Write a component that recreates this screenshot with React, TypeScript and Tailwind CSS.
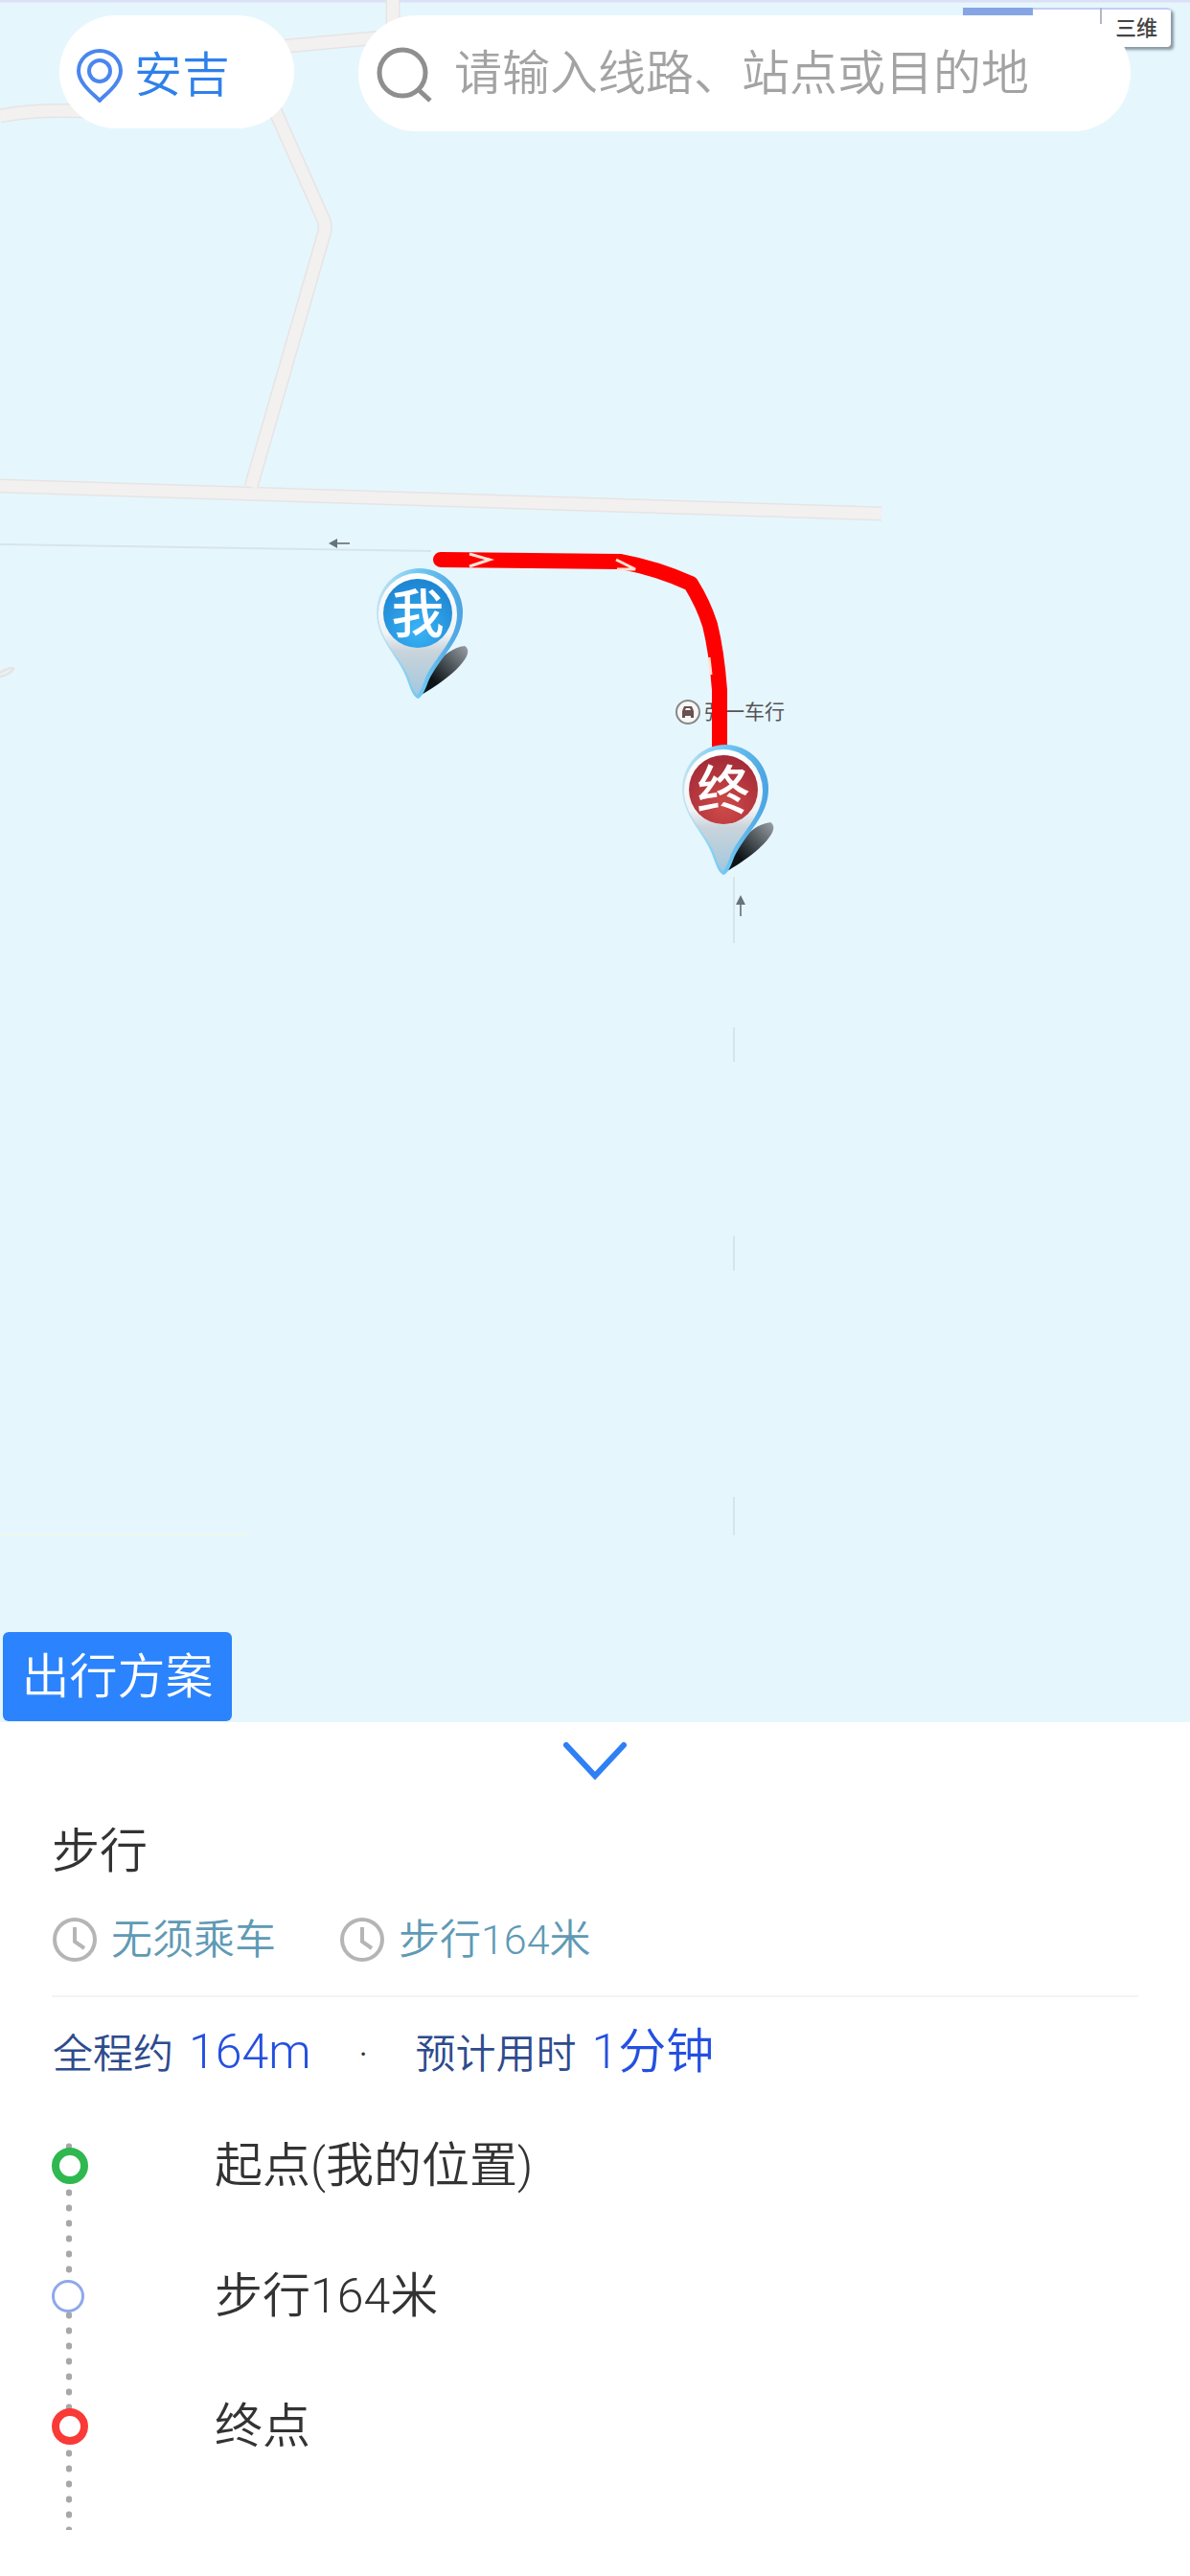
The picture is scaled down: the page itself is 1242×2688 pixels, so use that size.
import React from 'react';

const STEP_ROW = 'flex items-center gap-[132px] h-[136px] pl-[54px]';

function LocationIcon() {
  return (
    <svg width="48" height="56" viewBox="0 0 48 56" fill="none" stroke="#4a86ee" strokeWidth="4" strokeLinejoin="round" aria-hidden="true">
      <path d="M24 54 C20 49 2 37 2 23 A22 21 0 0 1 46 23 C46 37 28 49 24 54 Z" />
      <circle cx="24" cy="23" r="11" />
    </svg>
  );
}

function SearchIcon() {
  return (
    <svg className="shrink-0" width="60" height="60" viewBox="0 0 60 60" fill="none" stroke="#8f8f8f" strokeWidth="5" aria-hidden="true">
      <circle cx="28" cy="29" r="24" />
      <path d="M44 46 L57 58" />
    </svg>
  );
}

function ClockIcon() {
  return (
    <svg width="48" height="48" viewBox="0 0 48 48" fill="none" stroke="#b5b5b5" strokeWidth="4" aria-hidden="true">
      <circle cx="24" cy="24" r="21" />
      <path d="M24 11 V26 L34 33" />
    </svg>
  );
}

function Marker({ label, tone }: { label: string; tone: 'blue' | 'red' }) {
  const blue = tone === 'blue';
  const id = 'marker-' + tone;
  return (
    <svg width="110" height="146" viewBox="0 0 110 146" role="img" aria-label={label}>
      <defs>
        <linearGradient id={id + '-edge'} x1="0" y1="0" x2="1" y2="0">
          <stop offset="0" stopColor="#c3e4f4" />
          <stop offset="0.5" stopColor="#6fc8f2" />
          <stop offset="1" stopColor="#4aa3e2" />
        </linearGradient>
        <linearGradient id={id + '-body'} x1="0" y1="0" x2="0" y2="1">
          <stop offset="0" stopColor="#ffffff" />
          <stop offset="0.5" stopColor="#f0f3f5" />
          <stop offset="0.64" stopColor="#c9d4db" />
          <stop offset="1" stopColor="#a3c8de" />
        </linearGradient>
        <linearGradient id={id + '-shade'} x1="0" y1="1" x2="1" y2="0">
          <stop offset="0.3" stopColor="#0d1418" />
          <stop offset="1" stopColor="#9aa1a6" />
        </linearGradient>
        <radialGradient id={id + '-disc'} cx="0.5" cy="0.75" r="0.7">
          <stop offset="0" stopColor={blue ? '#3ab4f6' : '#cf4a48'} />
          <stop offset="1" stopColor={blue ? '#1f86d3' : '#a52c38'} />
        </radialGradient>
      </defs>
      <path d="M47 137 C53 117 70 88 94 85 C106 92 84 116 47 137 Z" fill={`url(#${id}-shade)`} />
      <path d="M45 140 C39 137 37 128 33 118 C24 95 2 78 2 50 A45 46 0 0 1 92 50 C92 80 68 96 56 122 C52 133 49 139 45 140 Z" fill={`url(#${id}-edge)`} />
      <path d="M44 136 C40 131 38 125 35 116 C26 95 4 78 4 52 A41 43 0 0 1 86 52 C86 78 64 96 54 116 C50 126 48 133 44 136 Z" fill={`url(#${id}-body)`} />
      <ellipse cx="45" cy="51" rx="36" ry="36" fill={`url(#${id}-disc)`} />
      <text x="45" y="71" textAnchor="middle" fontSize="55" fontWeight="500" fill="#fff" fontFamily="Noto Sans CJK SC, sans-serif">{label}</text>
    </svg>
  );
}

function MapDrawing() {
  return (
    <svg className="absolute left-0 top-0" width="1242" height="1797" viewBox="0 0 1242 1797" fill="none" aria-hidden="true">
      <path d="M0 1 H1242" stroke="#dcdff6" strokeWidth="3" />
      <g stroke="#e6e4e4" strokeWidth="15" strokeLinejoin="round">
        <path d="M0 121 Q35 114 90 116 L300 48 L410 38 V0" />
        <path d="M286 113 L338 230 Q341 238 337 248 L262 508" />
        <path d="M0 507 L920 536" />
        <path d="M0 702 Q12 695 14 698 Q10 704 0 706" strokeWidth="3" />
      </g>
      <g stroke="#f3f0f0" strokeWidth="12" strokeLinejoin="round">
        <path d="M0 121 Q35 114 90 116 L300 48 L410 38 V0" />
        <path d="M286 113 L338 230 Q341 238 337 248 L262 508" />
        <path d="M0 507 L920 536" />
      </g>
      <path d="M0 568 L450 575 M766 915 V984 M766 1072 V1108 M766 1290 V1326 M766 1562 V1602" stroke="#d8e4ea" strokeWidth="2" />
      <path d="M0 1602 H258" stroke="#eef8ea" strokeWidth="2" />
      <g stroke="#7d898f" strokeWidth="2">
        <path d="M348 567 H365" />
        <path d="M773 940 V956" />
      </g>
      <path d="M343 567 L352 562 V572 Z M773 934 L768 944 H778 Z" fill="#66737a" />
    </svg>
  );
}

function RouteLine() {
  return (
    <svg className="absolute left-[440px] top-[560px]" width="330" height="230" viewBox="0 0 330 230" fill="none" aria-hidden="true">
      <path d="M20 24 L208 26 Q246 33 281 49 Q294 70 301 92 Q308 120 311 160 L311 220" stroke="#ff0000" strokeWidth="16" strokeLinecap="round" strokeLinejoin="round" />
      <path d="M50 18 L71 24 L50 31 M203 24 L223 34 L204 34 M300 126 L302 144" stroke="#ffe3d6" strokeWidth="3" />
    </svg>
  );
}

function StepDot({ tone }: { tone: string }) {
  return <span className={`relative box-border rounded-full bg-white ${tone}`} />;
}

export default function App() {
  return (
    <main className="flex min-h-screen w-full flex-col bg-white text-[50px] [font-weight:350] leading-[60px] text-[#333] [font-family:Roboto,'Noto_Sans_CJK_SC',sans-serif]">
      <section className="relative flex h-[1797px] flex-col justify-between overflow-hidden bg-[#e6f6fd]">
        <MapDrawing />
        <div className="absolute left-[704px] top-[729px] flex items-center gap-[3px] text-[21px] font-normal leading-[28px] text-[#555]">
          <svg width="28" height="28" viewBox="0 0 28 28" aria-hidden="true">
            <circle cx="14" cy="14" r="12" fill="#f7f7f7" stroke="#888" strokeWidth="2" />
            <path d="M8 13 L10 8 H18 L20 13 V20 H17 V18 H11 V20 H8 Z" fill="#6b5050" />
            <path d="M11 12 L12 10 H16 L17 12 Z" fill="#fff" />
          </svg>
          <span>弘一车行</span>
        </div>
        <RouteLine />
        <div className="absolute left-[391px] top-[589px]"><Marker label="我" tone="blue" /></div>
        <div className="absolute left-[710px] top-[773px]"><Marker label="终" tone="red" /></div>
        <button className="absolute right-[20px] top-[8px] flex h-[41px] w-[216px] items-center justify-end rounded-[4px] border-t-2 border-[#c3cdf5] bg-white pr-[14px] text-[22px] font-medium leading-[28px] text-[#444] shadow-[3px_3px_3px_#8997a5]">三维</button>
        <header className="relative flex items-start pl-[62px] pr-[62px] pt-4">
          <button className="flex h-[118px] w-[245px] items-center gap-[12px] rounded-full bg-white pl-[18px] pt-2 text-[#2f80ea]">
            <LocationIcon />
            <span>安吉</span>
          </button>
          <label className="ml-[67px] flex h-[121px] flex-1 items-center gap-[22px] rounded-full bg-white pl-[18px]">
            <SearchIcon />
            <input aria-label="搜索" placeholder="请输入线路、站点或目的地" className="w-full min-w-0 bg-transparent outline-none placeholder:text-[#a3a3a3]" />
          </label>
          <span className="absolute right-[164px] top-[8px] h-[8px] w-[73px] bg-[#87a5e2]" />
          <span className="absolute right-[92px] top-[8px] h-[17px] w-[2px] bg-[#b4b8c4]" />
        </header>
        <button className="relative mb-px ml-[3px] h-[93px] w-[239px] self-start rounded-[6px] bg-[#2b83fd] text-white">出行方案</button>
      </section>
      <section className="flex flex-1 flex-col">
        <button aria-label="收起" className="flex h-[82px] items-center justify-center">
          <svg width="70" height="42" viewBox="0 0 70 42" fill="none" stroke="#2f7ff5" strokeWidth="6" strokeLinecap="round" aria-hidden="true">
            <path d="M5 4 L35 36 L65 4" />
          </svg>
        </button>
        <div className="mx-[54px] border-b-2 border-[#f3f3f3] pb-[28px] pt-[23px]">
          <h1>步行</h1>
          <div className="mt-[32px] flex items-center text-[43px] leading-[60px] text-[#5f9ab5]">
            <span className="flex items-center gap-[14px]"><ClockIcon />无须乘车</span>
            <span className="ml-[66px] flex items-center gap-[14px]"><ClockIcon />步行164米</span>
          </div>
        </div>
        <p className="flex items-baseline pl-[55px] pt-[27px] text-[42px] text-[#2d4b8e]">
          <span>全程约</span>
          <span className="ml-[16px] text-[50px] text-[#2450e0]">164m</span>
          <span className="w-[109px] text-center text-[#333]">·</span>
          <span>预计用时</span>
          <span className="ml-[16px] text-[50px] text-[#2450e0]">1分钟</span>
        </p>
        <ol className="relative mt-[18px]">
          <li aria-hidden="true" className="absolute left-[69px] top-[40px] h-[408px] w-[6px] bg-[radial-gradient(circle,#a8a8a8_3px,transparent_4px)] bg-[size:6px_16px]" />
          <li className={STEP_ROW}><StepDot tone="size-[38px] border-[8px] border-[#2fb850]" />起点(我的位置)</li>
          <li className={STEP_ROW}><StepDot tone="size-[34px] mr-1 border-[3px] border-[#8fa8ec]" />步行164米</li>
          <li className={STEP_ROW}><StepDot tone="size-[38px] border-[8px] border-[#f93a36]" />终点</li>
        </ol>
      </section>
    </main>
  );
}
